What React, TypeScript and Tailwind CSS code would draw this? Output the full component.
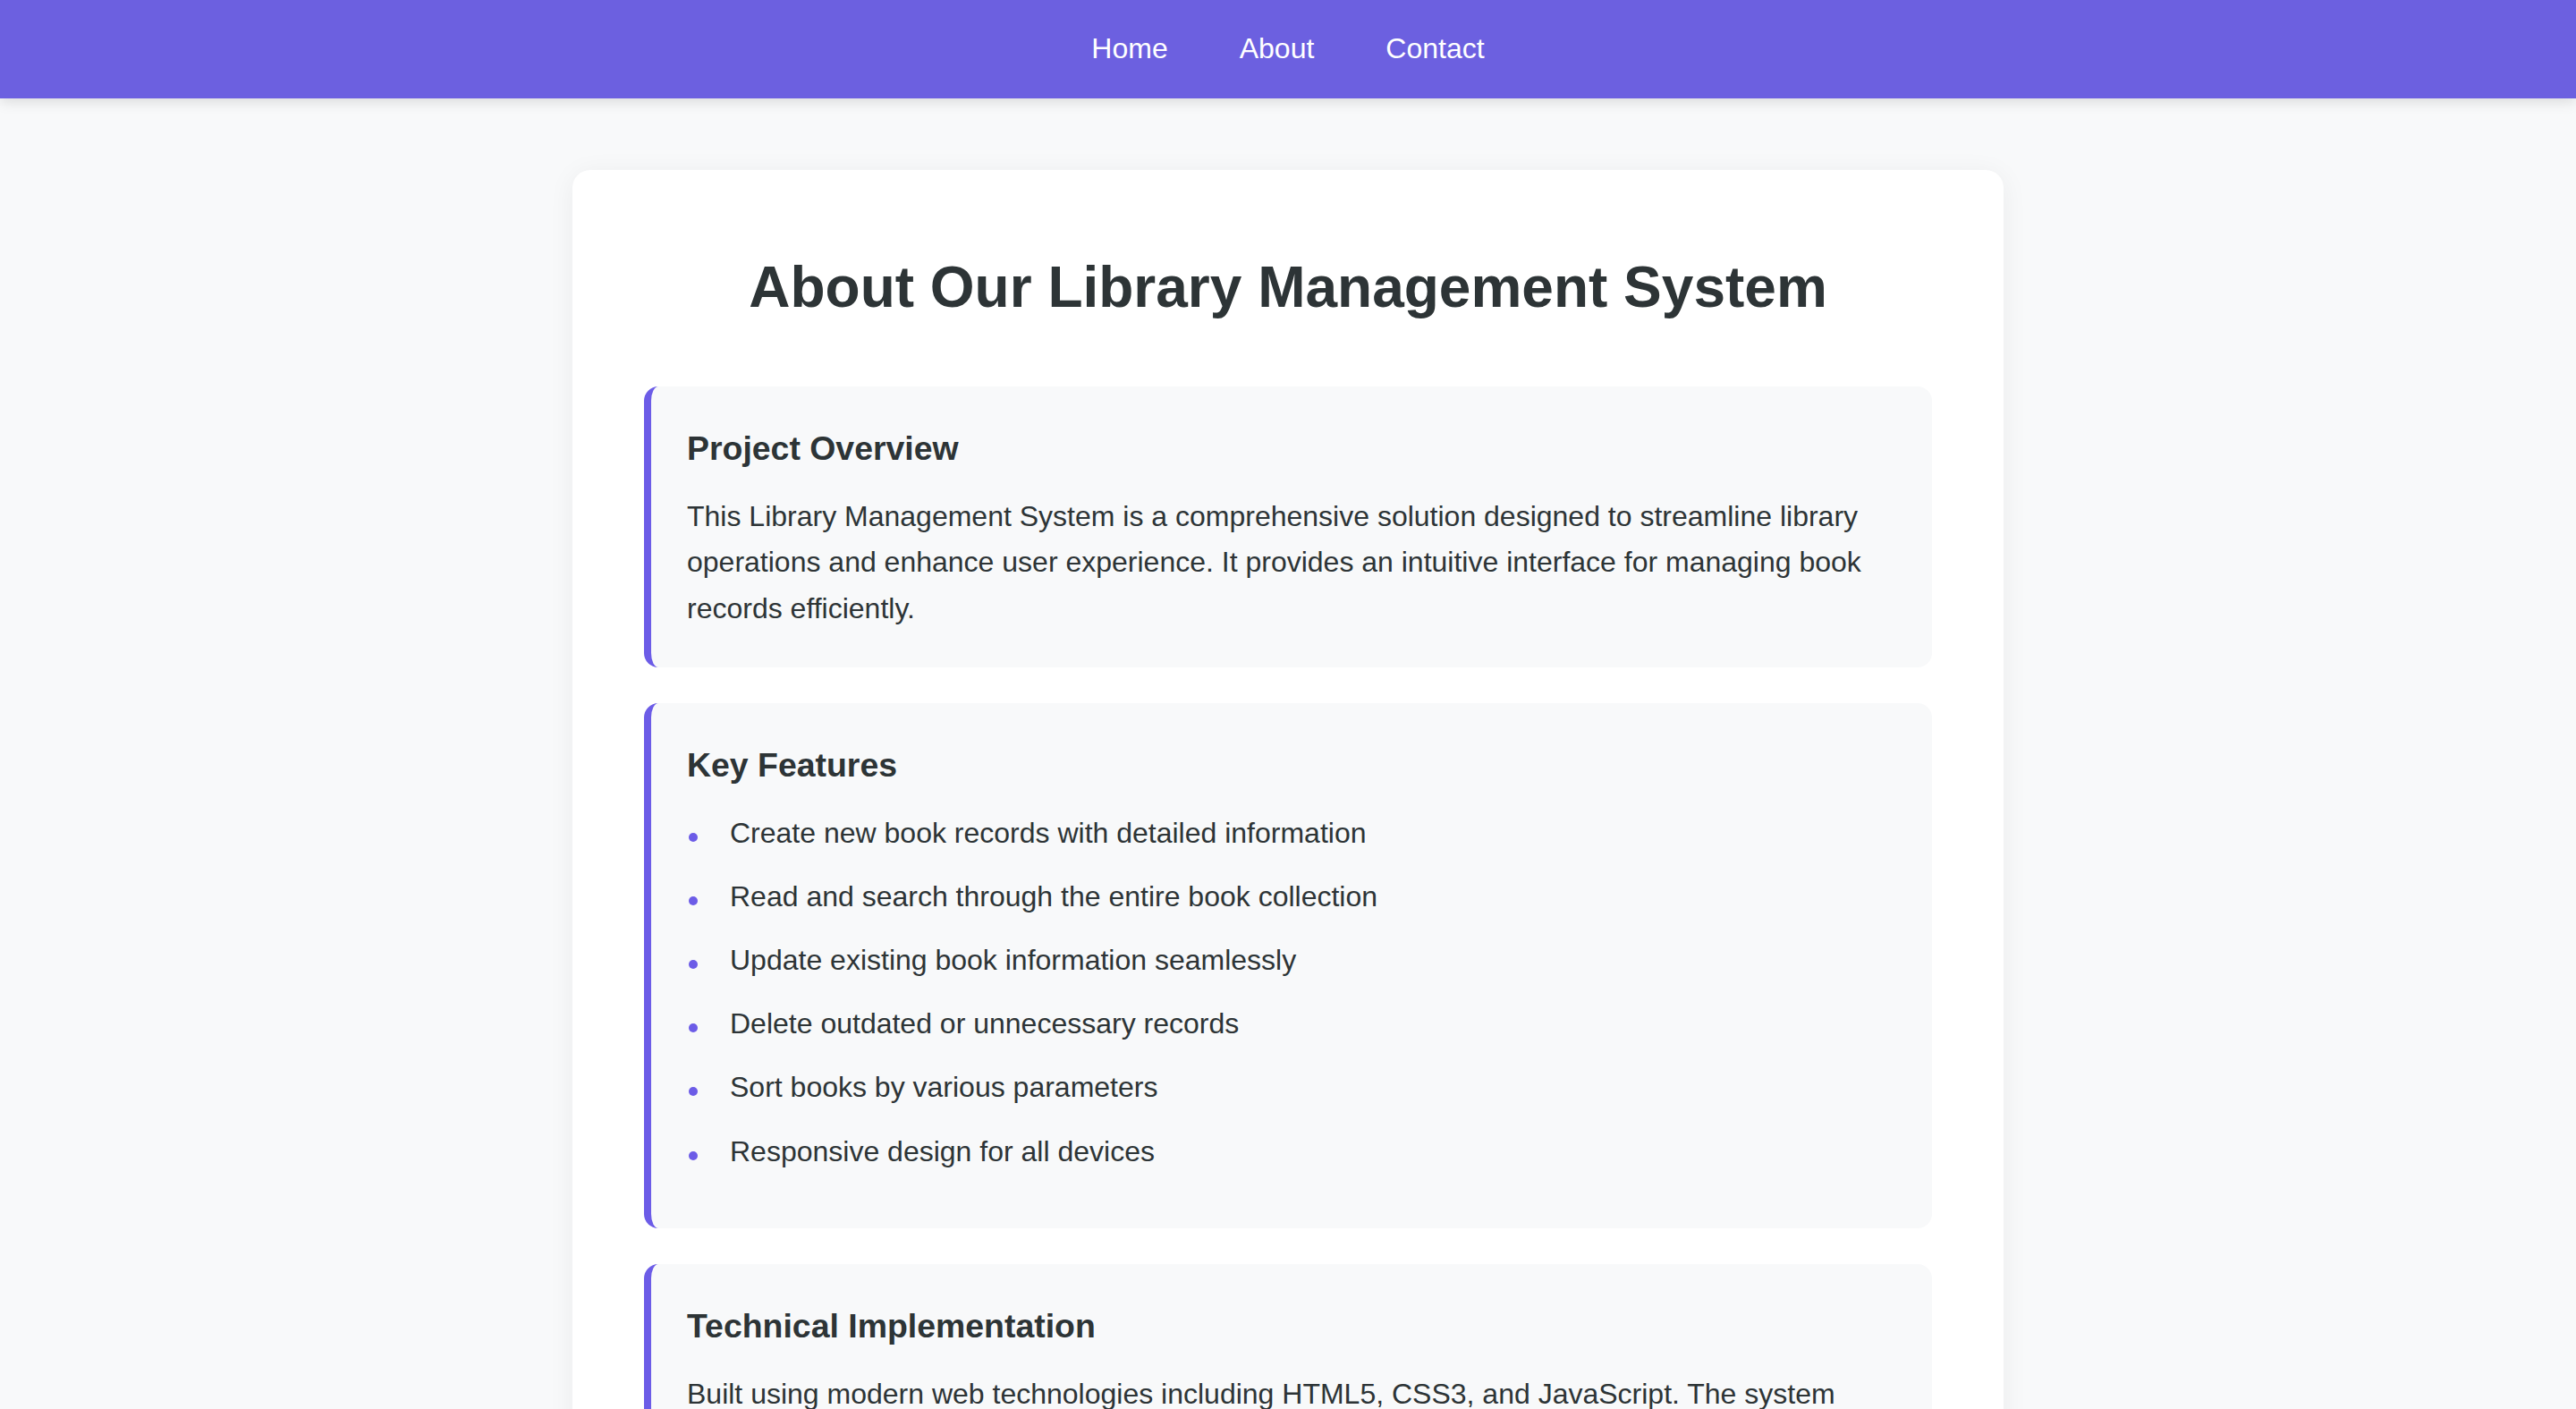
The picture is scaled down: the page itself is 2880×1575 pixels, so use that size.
import React from "react";

const features = [
  "Create new book records with detailed information",
  "Read and search through the entire book collection",
  "Update existing book information seamlessly",
  "Delete outdated or unnecessary records",
  "Sort books by various parameters",
  "Responsive design for all devices",
];

function Section({ title, children }: { title: string; children: React.ReactNode }) {
  return (
    <section className="mb-[40px] rounded-[16px] border-l-[8px] border-[#6c5ce7] bg-[#f8f9fa] p-[40px]">
      {/* Section heading */}
      <h3 className="mb-[20px] text-[37.44px] font-bold leading-[1.6] text-[#2d3436]">{title}</h3>
      {children}
    </section>
  );
}

export default function App() {
  return (
    <div className="min-h-screen bg-[#f8f9fa] font-['Liberation_Sans',Arial,sans-serif] text-[32px] leading-[1.6] text-[#2d3436]">
      {/* Navigation */}
      <nav className="flex h-[110px] items-center justify-center gap-[80px] bg-[#6c60e0] shadow-[0_4px_14px_rgba(0,0,0,0.12)]">
        <a className="text-[32px] text-white">Home</a>
        <a className="text-[32px] text-white">About</a>
        <a className="text-[32px] text-white">Contact</a>
      </nav>

      {/* Main card */}
      <main className="mx-auto mt-[80px] w-[1600px] rounded-[20px] bg-white p-[80px] shadow-[0_4px_30px_rgba(0,0,0,0.06)]">
        <h1 className="mb-[60px] text-center text-[64px] font-bold leading-[1.6] text-[#2d3436]">
          About Our Library Management System
        </h1>

        <Section title="Project Overview">
          <p>
            This Library Management System is a comprehensive solution designed to streamline library
            operations and enhance user experience. It provides an intuitive interface for managing book
            records efficiently.
          </p>
        </Section>

        <Section title="Key Features">
          <ul>
            {features.map((f) => (
              <li key={f} className="relative mb-[20px] pl-[48px]">
                <span className="absolute left-[2px] top-[25px] h-[10px] w-[10px] rounded-full bg-[#6c5ce7]" />
                {f}
              </li>
            ))}
          </ul>
        </Section>

        <Section title="Technical Implementation">
          <p>
            Built using modern web technologies including HTML5, CSS3, and JavaScript. The system
            uses local storage for data persistence and follows a clean, modular architecture that is
            easy to maintain and extend.
          </p>
        </Section>
      </main>
    </div>
  );
}
